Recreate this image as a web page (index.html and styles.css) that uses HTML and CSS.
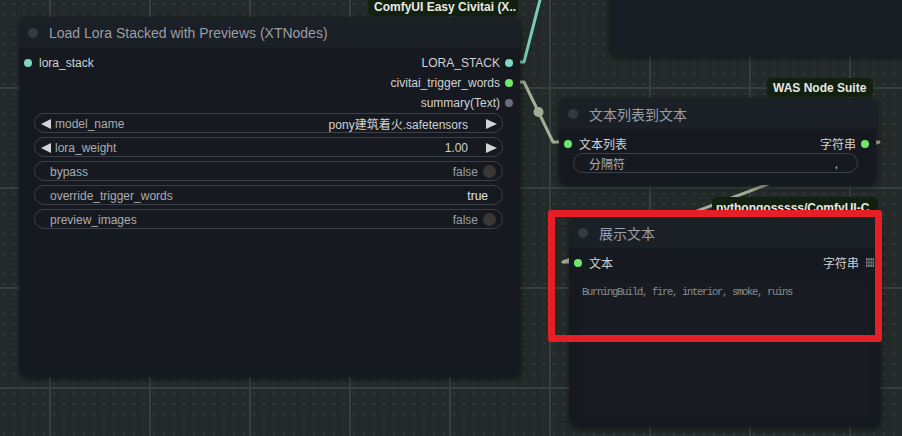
FILE: index.html
```html
<!DOCTYPE html>
<html lang="zh">
<head>
<meta charset="utf-8">
<title>ComfyUI</title>
<link rel="stylesheet" href="styles.css">
</head>
<body>
<div class="canvas">
  <svg class="links" width="902" height="436" viewBox="0 0 902 436">
    <polyline class="link teal" points="505,62 524,62 542,-8"/>
    <polyline class="link sage" points="505,82 524,82 553,142 572,142"/>
    <circle class="mid sage-fill" cx="538.5" cy="112" r="5"/>
    <polyline class="link sage" points="860,142 879,142 563,262 582,262"/>
  </svg>

  <div class="node node-top"></div>

  <div class="node node-lora">
    <div class="title"><span class="tdot"></span><span class="ttext">Load Lora Stacked with Previews (XTNodes)</span></div>
    <div class="slots">
      <div class="slot-row">
        <div class="in"><span class="dot teal-dot"></span><span>lora_stack</span></div>
        <div class="out"><span>LORA_STACK</span><span class="dot teal-dot"></span></div>
      </div>
      <div class="slot-row">
        <div class="in"></div>
        <div class="out"><span>civitai_trigger_words</span><span class="dot green-dot"></span></div>
      </div>
      <div class="slot-row">
        <div class="in"></div>
        <div class="out"><span>summary(Text)</span><span class="dot gray-dot"></span></div>
      </div>
    </div>
    <div class="widgets">
      <div class="widget combo">
        <svg class="arrow" width="10" height="10" viewBox="0 0 10 10"><polygon points="0,5 10,0 10,10"/></svg>
        <span class="wlabel">model_name</span>
        <span class="wvalue">pony建筑着火.safetensors</span>
        <svg class="arrow arrow-r" width="11" height="10" viewBox="0 0 11 10"><polygon points="0,0 11,5 0,10"/></svg>
      </div>
      <div class="widget combo">
        <svg class="arrow" width="10" height="10" viewBox="0 0 10 10"><polygon points="0,5 10,0 10,10"/></svg>
        <span class="wlabel">lora_weight</span>
        <span class="wvalue">1.00</span>
        <svg class="arrow arrow-r" width="11" height="10" viewBox="0 0 11 10"><polygon points="0,0 11,5 0,10"/></svg>
      </div>
      <div class="widget toggle">
        <span class="wlabel">bypass</span>
        <span class="tvalue">false</span>
        <span class="knob"></span>
      </div>
      <div class="widget toggle on">
        <span class="wlabel">override_trigger_words</span>
        <span class="tvalue strong">true</span>
      </div>
      <div class="widget toggle">
        <span class="wlabel">preview_images</span>
        <span class="tvalue">false</span>
        <span class="knob"></span>
      </div>
    </div>
  </div>

  <div class="node node-join">
    <div class="title"><span class="tdot"></span><span class="ttext">文本列表到文本</span></div>
    <div class="slots">
      <div class="slot-row">
        <div class="in"><span class="dot green-dot"></span><span>文本列表</span></div>
        <div class="out"><span>字符串</span><span class="dot green-dot"></span></div>
      </div>
    </div>
    <div class="widgets">
      <div class="widget text">
        <span class="wlabel">分隔符</span>
        <span class="wvalue">,</span>
      </div>
    </div>
  </div>

  <div class="node node-show">
    <div class="title"><span class="tdot"></span><span class="ttext">展示文本</span></div>
    <div class="slots">
      <div class="slot-row">
        <div class="in"><span class="dot green-dot"></span><span>文本</span></div>
        <div class="out"><span>字符串</span>
          <svg class="grip" width="8" height="9" viewBox="0 0 8 9">
            <rect x="0" y="0" width="1.4" height="9"/><rect x="2.2" y="0" width="1.4" height="9"/><rect x="4.4" y="0" width="1.4" height="9"/><rect x="6.6" y="0" width="1.4" height="9"/>
            <rect class="gap" x="0" y="2.6" width="8" height="0.8"/><rect class="gap" x="0" y="5.6" width="8" height="0.8"/>
          </svg>
        </div>
      </div>
    </div>
    <div class="textarea">BurningBuild, fire, interior, smoke, ruins</div>
  </div>

  <div class="badge badge-civitai">ComfyUI Easy Civitai (X..</div>
  <div class="badge badge-was">WAS Node Suite</div>
  <div class="badge badge-py">pythongosssss/ComfyUI-C..</div>

  <div class="highlight"></div>
</div>
</body>
</html>
```

FILE: styles.css
```css
* { box-sizing: border-box; }

html, body {
  margin: 0;
  padding: 0;
  width: 902px;
  height: 436px;
  overflow: hidden;
  background: #232a29;
}

.canvas {
  position: relative;
  width: 902px;
  height: 436px;
  overflow: hidden;
  font-family: "Liberation Sans", "Noto Sans CJK SC", sans-serif;
  background-color: #232a29;
  background-image:
    linear-gradient(to right, #36403e 0, #36403e 2px, transparent 2px),
    linear-gradient(to bottom, #36403e 0, #36403e 2px, transparent 2px),
    radial-gradient(circle at 1px 1px, #323d3b 0, #323d3b 1px, transparent 1.2px);
  background-size: 100px 100px, 100px 100px, 10px 10px;
  background-position: 49px 0, 0 87px, 3px 3px;
}

.links {
  position: absolute;
  left: 0;
  top: 0;
}

.link {
  fill: none;
  stroke-width: 3;
  stroke-linejoin: round;
}

.teal { stroke: #79cbb8; }
.sage { stroke: #a3ac95; }
.sage-fill { fill: #a3ac95; }

.node {
  position: absolute;
  background: #161a20;
  border-radius: 8px;
  box-shadow: 1px 2px 6px rgba(0, 0, 0, 0.45);
  display: flex;
  flex-direction: column;
}

.node-top {
  left: 609px;
  top: -20px;
  width: 320px;
  height: 76px;
  background: #181c23;
}

.node-lora {
  left: 19px;
  top: 17px;
  width: 501px;
  height: 360px;
}

.node-join {
  left: 559px;
  top: 98px;
  width: 317px;
  height: 87px;
}

.node-show {
  left: 569px;
  top: 217px;
  width: 311px;
  height: 210px;
}

.title {
  height: 31px;
  flex: none;
  display: flex;
  align-items: center;
  gap: 11px;
  padding-left: 9px;
  padding-top: 1px;
  background: #1b1f26;
  border-radius: 8px 8px 0 0;
  color: #9a9ea5;
  font-size: 14px;
}

.tdot {
  width: 10px;
  height: 10px;
  border-radius: 50%;
  background: #353941;
  flex: none;
}

.slots {
  padding-top: 4px;
  display: flex;
  flex-direction: column;
}

.slot-row {
  height: 20px;
  display: flex;
  align-items: center;
  justify-content: space-between;
  font-size: 12px;
  color: #cfd1d4;
  padding-top: 1px;
}

.in {
  display: flex;
  align-items: center;
  gap: 7px;
  padding-left: 5px;
}

.out {
  display: flex;
  align-items: center;
  gap: 5px;
  padding-right: 7px;
}

.node-show .out { padding-right: 6px; gap: 7px; }

.dot {
  width: 8px;
  height: 8px;
  border-radius: 50%;
  flex: none;
}

.teal-dot { background: #7fd6c4; }
.green-dot { background: #6ee86a; }
.gray-dot { background: #6d6b78; }

.grip rect { fill: #8a8c90; }
.grip rect.gap { fill: #161a20; }

.widgets {
  display: flex;
  flex-direction: column;
  gap: 4px;
  padding: 1px 17px 0 15px;
}

.node-join .widgets { padding: 0 18px 0 14px; }

.widget {
  height: 20px;
  border: 1px solid #3a3f48;
  border-radius: 10px;
  background: #161a20;
  display: flex;
  align-items: center;
  font-size: 12px;
  color: #a9acb1;
  padding-top: 1px;
}

.widget .wlabel { flex: 1; }

.combo { padding: 1px 5px 0 6px; }
.combo .arrow { fill: #d2d4d7; flex: none; }
.combo .wlabel { margin-left: 4px; }
.combo .wvalue { color: #cfd1d4; margin-right: 18px; }

.toggle { padding: 1px 6px 0 15px; }
.toggle .tvalue { color: #9c9fa4; margin-right: 5px; }
.toggle.on { padding-right: 14px; }
.toggle .tvalue.strong { color: #e2e3e5; margin-right: 0; }

.knob {
  width: 13px;
  height: 13px;
  border-radius: 50%;
  background: #3a3733;
  flex: none;
}

.text { padding: 1px 19px 0 15px; }
.text .wvalue { color: #cfd1d4; }

.textarea {
  margin: 11px 11px 10px 11px;
  flex: 1;
  background: #181b21;
  font-family: "Liberation Mono", monospace;
  font-size: 10.5px;
  letter-spacing: -1.3px;
  color: #878b91;
  padding: 3px 2px;
  line-height: 13px;
}

.badge {
  position: absolute;
  background: #12200f;
  color: #e8e9e6;
  font-weight: bold;
  font-size: 12px;
  border-radius: 5px;
  display: flex;
  align-items: center;
  padding: 0 6px;
  white-space: nowrap;
  overflow: hidden;
}

.badge-civitai {
  left: 368px;
  top: -6px;
  width: 150px;
  height: 22px;
  padding-top: 3px;
}

.badge-was {
  left: 767px;
  top: 78px;
  width: 106px;
  height: 19px;
}

.badge-py {
  left: 712px;
  top: 197px;
  width: 166px;
  height: 20px;
  padding-left: 4px;
  align-items: flex-start;
  padding-top: 4px;
}

.highlight {
  position: absolute;
  left: 548px;
  top: 210px;
  width: 334px;
  height: 132px;
  border: 7px solid #e61e26;
  border-radius: 3px;
}
```
